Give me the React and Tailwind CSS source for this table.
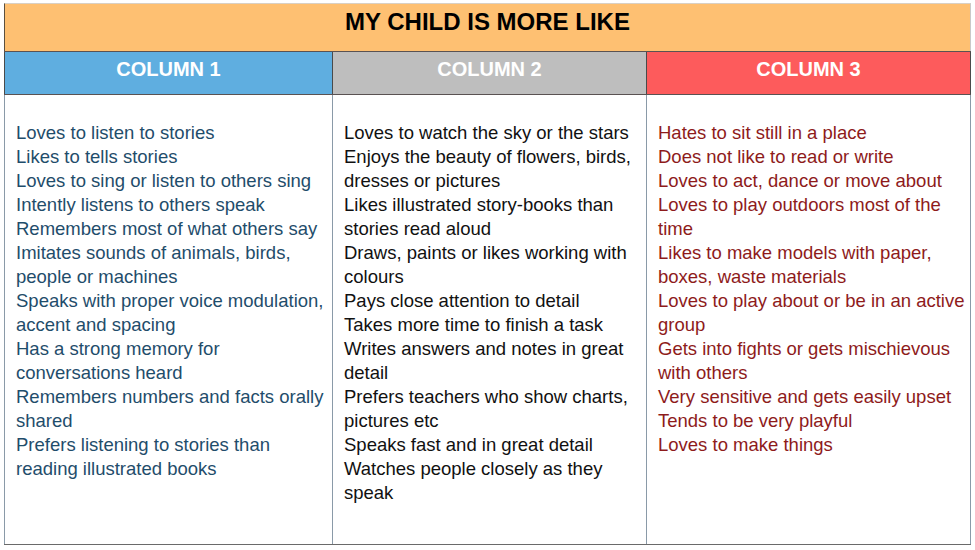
import React from "react";

const col1 = [
  "Loves to listen to stories",
  "Likes to tells stories",
  "Loves to sing or listen to others sing",
  "Intently listens to others speak",
  "Remembers most of what others say",
  "Imitates sounds of animals, birds, people or machines",
  "Speaks with proper voice modulation, accent and spacing",
  "Has a strong memory for conversations heard",
  "Remembers numbers and facts orally shared",
  "Prefers listening to stories than reading illustrated books",
];
const col2 = [
  "Loves to watch the sky or the stars",
  "Enjoys the beauty of flowers, birds, dresses or pictures",
  "Likes illustrated story-books than stories read aloud",
  "Draws, paints or likes working with colours",
  "Pays close attention to detail",
  "Takes more time to finish a task",
  "Writes answers and notes in great detail",
  "Prefers teachers who show charts, pictures etc",
  "Speaks fast and in great detail",
  "Watches people closely as they speak",
];
const col3 = [
  "Hates to sit still in a place",
  "Does not like to read or write",
  "Loves to act, dance or move about",
  "Loves to play outdoors most of the time",
  "Likes to make models with paper, boxes, waste materials",
  "Loves to play about or be in an active group",
  "Gets into fights or gets mischievous with others",
  "Very sensitive and gets easily upset",
  "Tends to be very playful",
  "Loves to make things",
];

function List({ items, color }) {
  return (
    <div className={`flex flex-col ${color}`}>
      {items.map((t, i) => (
        <div key={i}>{t}</div>
      ))}
    </div>
  );
}

export default function App() {
  return (
    <div
      className="w-[975px] h-[550px] bg-white pt-[3px] pl-[4px]"
      style={{ fontFamily: '"Liberation Sans", Arial, sans-serif' }}
    >
      <div className="w-[967px] flex flex-col">
        <div className="h-[48px] bg-[#fec072] border-l border-t border-l-[#5b5040] border-t-[#d9d0c4] border-r border-r-[#c9c9c9] flex justify-center pt-[3px]">
          <span className="text-[24px] font-bold text-black leading-[30px]">
            MY CHILD IS MORE LIKE
          </span>
        </div>
        <div className="grid grid-cols-[328px_314px_325px] h-[44px] border-t border-b border-[#5a5252]">
          <div className="bg-[#5faee0] border-l border-[#4a4a4a] flex justify-center pt-[3px]">
            <span className="text-white font-bold text-[20px] leading-[28px]">COLUMN 1</span>
          </div>
          <div className="bg-[#bebebe] border-l border-[#4a4a4a] flex justify-center pt-[3px]">
            <span className="text-white font-bold text-[20px] leading-[28px]">COLUMN 2</span>
          </div>
          <div className="bg-[#fd5b5c] border-l border-r border-[#4a4a4a] flex justify-center pt-[3px]">
            <span className="text-white font-bold text-[20px] leading-[28px]">COLUMN 3</span>
          </div>
        </div>
        <div className="grid grid-cols-[328px_314px_325px] h-[450px] border-b border-b-[#6a6a6a] text-[18.5px] leading-[24px]">
          <div className="border-l border-[#8a9aa8] pl-[11px] pr-[2px] pt-[26px]">
            <List items={col1} color="text-[#1f4d6b]" />
          </div>
          <div className="border-l border-[#8a9aa8] pl-[11px] pr-[2px] pt-[26px]">
            <List items={col2} color="text-[#111111]" />
          </div>
          <div className="border-l border-r border-[#8a9aa8] pl-[11px] pr-[2px] pt-[26px]">
            <List items={col3} color="text-[#8e1b1b]" />
          </div>
        </div>
      </div>
    </div>
  );
}
